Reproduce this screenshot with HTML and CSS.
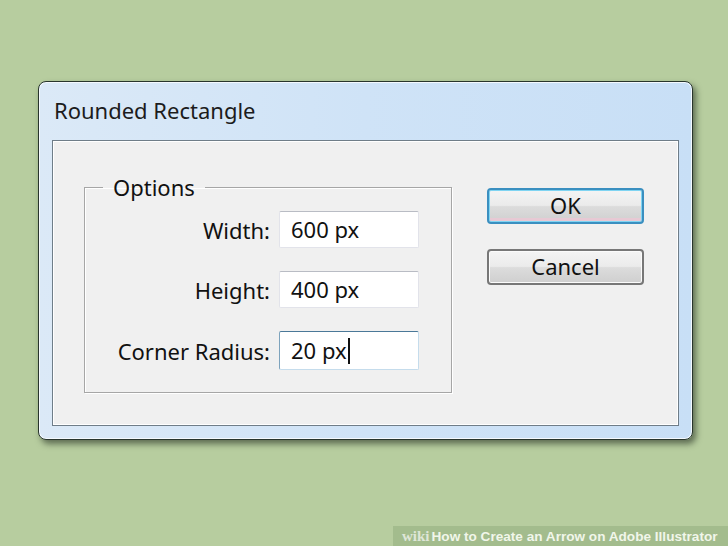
FILE: index.html
```html
<!DOCTYPE html>
<html>
<head>
<meta charset="utf-8">
<title>Rounded Rectangle</title>
<link rel="stylesheet" href="styles.css">
</head>
<body>

<div class="dialog">
  <div class="title">Rounded Rectangle</div>
  <div class="panel">
    <fieldset class="group">
      <legend>Options</legend>
      <div class="row">
        <span class="label">Width:</span>
        <div class="field">600 px</div>
      </div>
      <div class="row">
        <span class="label">Height:</span>
        <div class="field">400 px</div>
      </div>
      <div class="row">
        <span class="label">Corner Radius:</span>
        <div class="field focus">20 px<span class="caret"></span></div>
      </div>
    </fieldset>
    <div class="buttons">
      <div class="btn default">OK</div>
      <div class="btn">Cancel</div>
    </div>
  </div>
</div>

<div class="wm"><span class="wiki">wiki</span>How to Create an Arrow on Adobe Illustrator</div>

</body>
</html>
```

FILE: styles.css
```css
body {
   margin: 0;
   background-color: #b7cd9f;
   font-family: "Noto Sans", "Open Sans", sans-serif;
   color: #111;
   width: 728px;
   height: 546px;
   overflow: hidden;
   position: relative;
}

.dialog {
   margin: 81px 0 0 38px;
   width: 653px;
   height: 357px;
   border: 1px solid #28352d;
   border-radius: 8px;
   background: linear-gradient(90deg, #dbe9f7 0%, #cfe3f7 50%, #c8dff6 100%);
   box-shadow: inset 0 0 0 1px #f4f9fe, 3px 4px 6px rgba(20, 30, 20, 0.55);
   display: flex;
   flex-direction: column;
}

.title {
   height: 58px;
   padding-left: 15px;
   font-size: 22px;
   line-height: 56px;
   color: #1c1c1c;
}

.panel {
   margin: 0 13px;
   height: 286px;
   border: 1px solid #6f7d88;
   background-color: #f0f0f0;
   box-shadow: inset 0 0 0 1px #ffffff;
   display: flex;
   padding: 34px 0 0 31px;
   box-sizing: border-box;
   gap: 35px;
}

.group {
   margin: 0;
   width: 368px;
   height: 218px;
   box-sizing: border-box;
   border: 1px solid #a6a6a6;
   box-shadow: 1px 1px 0 #ffffff, inset 1px 1px 0 #ffffff;
   padding: 12px 32px 0 0;
   display: flex;
   flex-direction: column;
   gap: 23px;
}

.group legend {
   margin-left: 18px;
   padding: 0 10px;
   font-size: 22px;
   line-height: 24px;
}

.row {
   display: flex;
   justify-content: flex-end;
   align-items: center;
   gap: 9px;
}

.label {
   font-size: 22px;
}

.field {
   width: 140px;
   height: 37px;
   box-sizing: border-box;
   background-color: #ffffff;
   border: 1px solid #e2e3ea;
   border-top-color: #b9bcc4;
   border-radius: 2px;
   padding-left: 11px;
   font-size: 22px;
   line-height: 35px;
   display: flex;
   align-items: center;
}

.field.focus {
   height: 39px;
   border-color: #c5dcec;
   border-top-color: #4a7898;
   border-left-color: #7da3bd;
}

.caret {
   display: inline-block;
   width: 2px;
   height: 26px;
   background-color: #111;
   margin-left: 1px;
}

.buttons {
   padding-top: 13px;
   display: flex;
   flex-direction: column;
   gap: 25px;
}

.btn {
   width: 157px;
   height: 36px;
   box-sizing: border-box;
   border: 2px solid #777;
   border-radius: 4px;
   background: linear-gradient(180deg, #f4f4f4 0%, #ebebeb 48%, #dcdcdc 52%, #cfcfcf 100%);
   box-shadow: inset 0 0 0 1px #fbfbfb;
   text-align: center;
   font-size: 22px;
   line-height: 31px;
}

.btn.default {
   border-color: #3a8fc0;
   box-shadow: inset 0 0 0 1px #7fd4f2, inset 0 -3px 0 1px #e7c9d4;
}

.wm {
   position: absolute;
   right: 0;
   bottom: 0;
   width: 326px;
   height: 20px;
   padding-left: 9px;
   background-color: rgba(120, 150, 100, 0.3);
   color: #f1f6ea;
   font-family: "Liberation Sans", Arial, sans-serif;
   font-size: 13.6px;
   font-weight: bold;
   line-height: 20px;
   white-space: nowrap;
}

.wm .wiki {
   font-family: "Liberation Serif", serif;
   font-size: 15px;
   color: #dfe6d8;
   margin-right: 2px;
}
```
